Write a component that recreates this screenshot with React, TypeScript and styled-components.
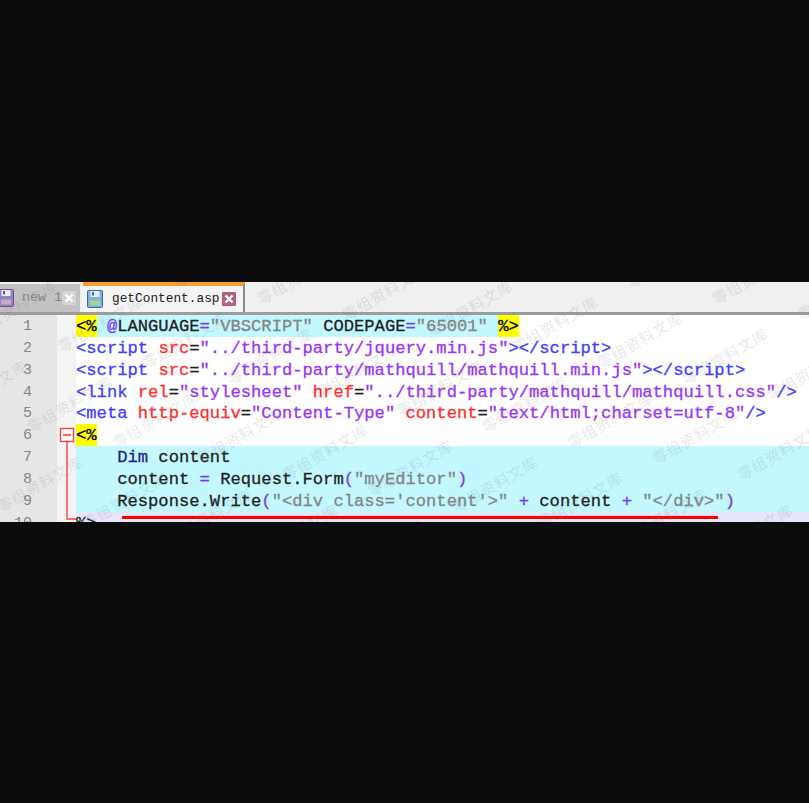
import React from "react";
import styled, { createGlobalStyle } from "styled-components";

const Global = createGlobalStyle`
  html, body { margin: 0; padding: 0; background: #0c0c0c; }
`;

const Page = styled.div`
  width: 809px;
  height: 803px;
  padding-top: 282px;
  box-sizing: border-box;
  background: #0c0c0c;
  overflow: hidden;
`;

const Strip = styled.div`
  position: relative;
  height: 240px;
  overflow: hidden;
  background: #fff;
  display: flex;
  flex-direction: column;
  filter: blur(0.7px);
`;

const TabBar = styled.div`
  height: 30px;
  flex: none;
  display: flex;
  align-items: flex-end;
  background: #f0f0f0;
  border-bottom: 3px solid #9c9c9c;
`;

const Tab = styled.div<{ $active?: boolean }>`
  box-sizing: border-box;
  display: flex;
  align-items: center;
  height: ${(p) => (p.$active ? "30px" : "28px")};
  width: ${(p) => (p.$active ? "162px" : "80px")};
  margin-left: ${(p) => (p.$active ? "3px" : "0")};
  padding-left: ${(p) => (p.$active ? "4px" : "0")};
  background: ${(p) => (p.$active ? "#f4f4f4" : "#c2c2c2")};
  border-top: ${(p) => (p.$active ? "4px solid #fa9f2a" : "0")};
  border-right: ${(p) => (p.$active ? "2px solid #8c8c8c" : "0")};
`;

const TabLabel = styled.span<{ $active?: boolean }>`
  font-family: "Liberation Mono", monospace;
  font-size: ${(p) => (p.$active ? "12.8px" : "13.3px")};
  line-height: 1;
  white-space: pre;
  color: ${(p) => (p.$active ? "#202020" : "#868686")};
  margin-left: ${(p) => (p.$active ? "9px" : "8px")};
`;

const Editor = styled.div`
  flex: 1;
  display: flex;
  min-height: 0;
`;

const Numbers = styled.div`
  width: 57px;
  flex: none;
  background: #e6e6e6;
`;

const Number = styled.div`
  height: 21.85px;
  line-height: 23.5px;
  width: 32px;
  text-align: right;
  font-family: "Liberation Mono", monospace;
  font-size: 15px;
  color: #858585;
`;

const Fold = styled.div`
  width: 19px;
  flex: none;
  background: #f4f4f4;
  position: relative;
`;

const FoldMark = styled.svg`
  position: absolute;
  left: 0;
  top: 110px;
`;

const Code = styled.div`
  flex: 1;
  min-width: 0;
  font-family: "Liberation Mono", monospace;
  font-size: 17.17px;
  color: #303030;
  -webkit-text-stroke: 0.3px currentColor;
`;

const Line = styled.div<{ $bg?: string }>`
  height: 21.85px;
  line-height: 23.6px;
  white-space: pre;
  background: ${(p) => p.$bg ?? "transparent"};
`;

const Cyan = styled.span`
  display: inline-block;
  height: 21.85px;
  vertical-align: top;
  background: #c3f8ff;
`;

const Mark = styled.span`
  display: inline-block;
  height: 21.85px;
  vertical-align: top;
  background: #ffff00;
  color: #000;
`;

const Tag = styled.span` color: #3f3fff; `;
const Attr = styled.span` color: #ff2f2f; `;
const Str = styled.span` color: #9a35f5; `;
const Plain = styled.span` color: #1f1f1f; `;
const Gray = styled.span` color: #858585; `;
const Op = styled.span` color: #7a3cf0; `;
const Kw = styled.span` color: #1f1f90; `;

const Underline = styled.div`
  position: absolute;
  left: 122px;
  top: 234px;
  width: 596px;
  height: 3px;
  background: #ff0000;
`;

const Watermark = styled.span<{ $x: number; $y: number }>`
  position: absolute;
  left: ${(p) => p.$x - 48}px;
  top: ${(p) => p.$y - 282 - 10}px;
  width: 96px;
  text-align: center;
  font-family: "Noto Sans CJK SC", sans-serif;
  font-size: 15px;
  line-height: 20px;
  letter-spacing: 1px;
  white-space: nowrap;
  color: rgba(110, 110, 110, 0.17);
  transform: rotate(-30deg);
  pointer-events: none;
`;

const Disk = ({ fill, dark, x = 0 }: { fill: string; dark: string; x?: number }) => (
  <svg width="16" height="18" viewBox="0 0 16 18" style={{ flex: "none", marginLeft: x }}>
    <rect x="0.5" y="0.5" width="15" height="17" rx="1" fill={fill} stroke={dark} />
    <rect x="3.5" y="1" width="9" height="6" fill="#e8eef6" />
    <rect x="5" y="2" width="2" height="3.5" fill={dark} />
    <rect x="3" y="10.5" width="10" height="5" fill={dark === "#7a4a8a" ? "#c8a8d0" : "#a6d58c"} />
  </svg>
);

const Close = ({ fill, x = 0 }: { fill: string; x?: number }) => (
  <svg width="14" height="14" viewBox="0 0 14 14" style={{ flex: "none", marginLeft: x }}>
    <rect width="14" height="14" rx="1" fill={fill} />
    <path d="M3.5 3.5 10.5 10.5M10.5 3.5 3.5 10.5" stroke="#fff" strokeWidth="2.4" />
  </svg>
);

const marks: [number, number][] = [];
for (let r = -2; r < 5; r++) {
  for (let c = -4; c < 12; c++) {
    marks.push([640 + (c - 3) * 85 - r * 30, 340 + (c - 3) * 16 + r * 80]);
  }
}

export default function App() {
  return (
    <Page>
      <Global />
      <Strip>
        <TabBar>
          <Tab>
            <Disk fill="#8f86c4" dark="#7a4a8a" x={-2} />
            <TabLabel>new 1</TabLabel>
            <Close fill="#d4d4d4" />
          </Tab>
          <Tab $active>
            <Disk fill="#7fb0e8" dark="#3a6ea8" />
            <TabLabel $active>getContent.asp</TabLabel>
            <Close fill="#b0647c" x={2} />
          </Tab>
        </TabBar>
        <Editor>
          <Numbers>
            {[1, 2, 3, 4, 5, 6, 7, 8, 9, 10].map((n) => (
              <Number key={n}>{n}</Number>
            ))}
          </Numbers>
          <Fold>
            <FoldMark width="19" height="95" viewBox="0 0 19 95">
              <rect x="3.5" y="3.5" width="13" height="13" fill="#fff" stroke="#ff4040" strokeWidth="1.4" />
              <path d="M6 10h8" stroke="#ff4040" strokeWidth="1.6" />
              <path d="M10 17V94H19" fill="none" stroke="#ff4040" strokeWidth="1.4" />
            </FoldMark>
          </Fold>
          <Code>
            <Line>
              <Mark>{"<%"}</Mark>
              <Cyan>
                {" "}<Op>@</Op><Plain>LANGUAGE</Plain><Op>=</Op><Gray>"VBSCRIPT"</Gray>{" "}
                <Plain>CODEPAGE</Plain><Op>=</Op><Gray>"65001"</Gray>{" "}
              </Cyan>
              <Mark>{"%>"}</Mark>
            </Line>
            <Line>
              <Tag>{"<script "}</Tag><Attr>src</Attr><Plain>=</Plain>
              <Str>"../third-party/jquery.min.js"</Str><Tag>{"></script>"}</Tag>
            </Line>
            <Line>
              <Tag>{"<script "}</Tag><Attr>src</Attr><Plain>=</Plain>
              <Str>"../third-party/mathquill/mathquill.min.js"</Str><Tag>{"></script>"}</Tag>
            </Line>
            <Line>
              <Tag>{"<link "}</Tag><Attr>rel</Attr><Plain>=</Plain><Str>"stylesheet"</Str>{" "}
              <Attr>href</Attr><Plain>=</Plain>
              <Str>"../third-party/mathquill/mathquill.css"</Str><Tag>{"/>"}</Tag>
            </Line>
            <Line>
              <Tag>{"<meta "}</Tag><Attr>http-equiv</Attr><Plain>=</Plain><Str>"Content-Type"</Str>{" "}
              <Attr>content</Attr><Plain>=</Plain><Str>"text/html;charset=utf-8"</Str><Tag>{"/>"}</Tag>
            </Line>
            <Line><Mark>{"<%"}</Mark></Line>
            <Line $bg="#c3f8ff">
              {"    "}<Kw>Dim</Kw><Plain>{" content"}</Plain>
            </Line>
            <Line $bg="#c3f8ff">
              {"    "}<Plain>content</Plain><Op>{" = "}</Op><Plain>Request.Form</Plain>
              <Op>(</Op><Gray>"myEditor"</Gray><Op>)</Op>
            </Line>
            <Line $bg="#c3f8ff">
              {"    "}<Plain>Response.Write</Plain><Op>(</Op>
              <Gray>{"\"<div class='content'>\""}</Gray><Op>{" + "}</Op><Plain>content</Plain>
              <Op>{" + "}</Op><Gray>{"\"</div>\""}</Gray><Op>)</Op>
            </Line>
            <Line $bg="#e6e6fa"><Plain>{"%>"}</Plain></Line>
          </Code>
        </Editor>
        <Underline />
        {marks.map(([x, y]) => (
          <Watermark key={`${x}-${y}`} $x={x} $y={y}>零组资料文库</Watermark>
        ))}
      </Strip>
    </Page>
  );
}
